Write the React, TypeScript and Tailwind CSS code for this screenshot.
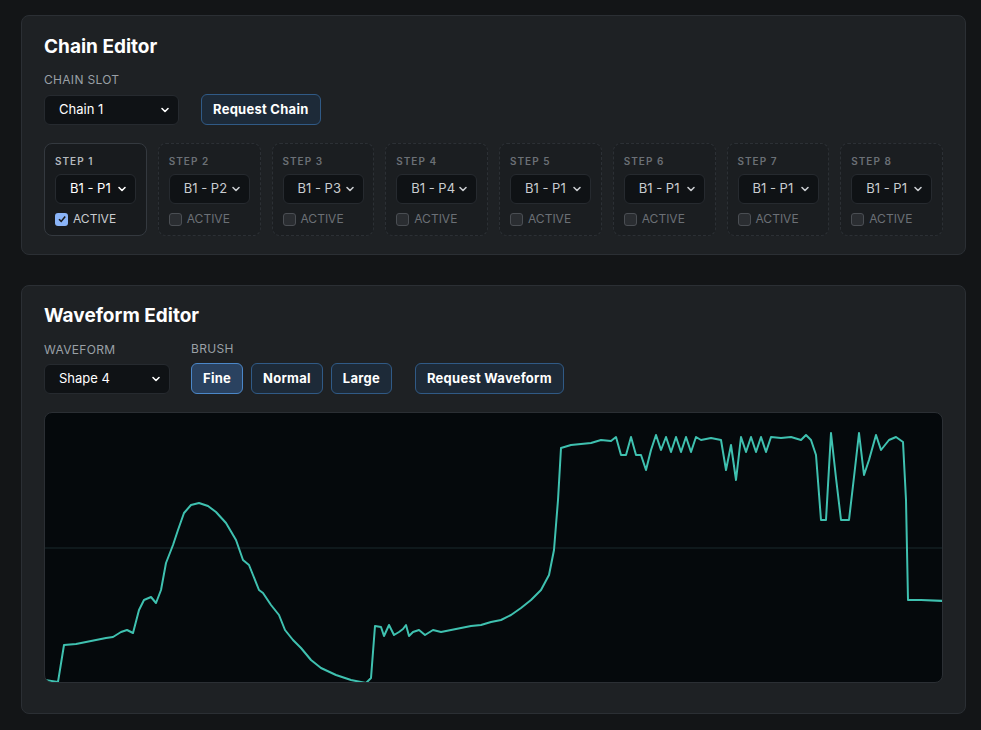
import React from "react";

const pts: [number, number][] = [[44,680],[57,682],[63,645],[75,644],[90,641],[105,638],[112,637],[120,632],[126,630],[132,633],[138,610],[143,600],[150,597],[155,603],[160,590],[165,563],[172,545],[177,530],[183,513],[190,505],[198,503],[207,506],[215,512],[225,523],[235,540],[242,560],[248,565],[252,575],[258,590],[262,593],[270,605],[278,615],[284,630],[292,640],[300,648],[310,660],[320,668],[335,675],[350,680],[365,683],[370,678],[374,626],[380,627],[383,636],[388,625],[393,635],[398,632],[402,629],[405,625],[408,636],[412,632],[418,630],[424,635],[432,630],[440,632],[450,630],[460,628],[470,626],[480,625],[490,622],[500,620],[510,615],[520,608],[530,600],[540,590],[548,575],[553,550],[557,500],[560,448],[570,445],[580,444],[590,443],[600,440],[610,441],[615,437],[620,455],[625,455],[630,437],[635,455],[640,455],[645,470],[650,450],[655,435],[660,450],[665,437],[670,452],[675,437],[680,452],[685,437],[690,452],[695,437],[700,440],[710,438],[720,440],[725,470],[730,445],[735,480],[740,437],[745,452],[750,437],[755,452],[760,437],[765,452],[770,437],[780,438],[790,437],[800,440],[805,435],[810,440],[815,455],[820,520],[825,520],[830,433],[835,478],[840,520],[848,520],[853,477],[858,433],[863,475],[868,460],[875,435],[880,450],[888,440],[895,437],[902,442],[905,500],[907,600],[920,600],[944,601]];

const font = { fontFamily: "Inter, 'Liberation Sans', sans-serif" };

function Chevron() {
  return (
    <svg width="10" height="10" viewBox="0 0 10 10" className="shrink-0">
      <path d="M2 3.5 L5 6.5 L8 3.5" fill="none" stroke="currentColor" strokeWidth="1.6" strokeLinecap="round" strokeLinejoin="round" />
    </svg>
  );
}

function Select({ label, w, dim }: { label: string; w: string; dim?: boolean }) {
  return (
    <div className={`${w} h-[30px] rounded-md border border-[#262a2f] bg-[#0f1215] flex items-center justify-between pl-[14px] pr-[8px] text-[13px] ${dim ? "text-[#c9ccd0]" : "text-white"}`}>
      <span>{label}</span>
      <Chevron />
    </div>
  );
}

function Btn({ children, active }: { children: React.ReactNode; active?: boolean }) {
  return (
    <div className={`h-[31px] px-[11px] rounded-md border flex items-center text-[13px] font-bold text-white tracking-[0.02em] ${active ? "bg-[#2a4260] border-[#4b87c8]" : "bg-[#1d2a38] border-[#305a86]"}`}>
      {children}
    </div>
  );
}

export default function App() {
  const steps = ["B1 - P1", "B1 - P2", "B1 - P3", "B1 - P4", "B1 - P1", "B1 - P1", "B1 - P1", "B1 - P1"];
  const d = pts.map(([x, y], i) => `${i ? "L" : "M"}${x - 44} ${y - 413}`).join(" ");
  return (
    <div style={font} className="w-[981px] h-[730px] bg-[#131517] pl-[21px] pr-[15px] pt-[15px] flex flex-col gap-[30px] overflow-hidden">
      <div className="h-[240px] rounded-lg border border-[#2b2f34] bg-[#1e2124] px-[22px] pt-[19px]">
        <div className="text-[19px] font-bold text-white leading-[24px]">Chain Editor</div>
        <div className="mt-[12px] text-[12px] text-[#9aa0a6] tracking-wide">CHAIN SLOT</div>
        <div className="mt-[5px] flex items-center gap-[22px]">
          <Select label="Chain 1" w="w-[135px]" />
          <Btn>Request Chain</Btn>
        </div>
        <div className="mt-[18px] grid grid-cols-8 gap-[11px]">
          {steps.map((s, i) => (
            <div key={i} className={`h-[93px] rounded-lg px-[10px] pt-[10px] ${i === 0 ? "border border-[#34393f] bg-[#181b1e]" : "border border-dashed border-[#2c3035] bg-[#1b1e21]"}`}>
              <div className={`text-[10px] font-semibold tracking-[0.1em] ${i === 0 ? "text-[#b4b9be]" : "text-[#6b7076]"}`}>STEP {i + 1}</div>
              <div className="mt-[5px]">
                <Select label={s} w="w-[81px]" dim={i !== 0} />
              </div>
              <div className={`mt-[6px] flex items-center gap-[5px] text-[12px] ${i === 0 ? "text-[#c9ccd0]" : "text-[#6b7076]"}`}>
                {i === 0 ? (
                  <div className="w-[13px] h-[13px] rounded-[3px] bg-[#8ab4f8] flex items-center justify-center">
                    <svg width="10" height="10" viewBox="0 0 10 10"><path d="M2 5.2 L4.2 7.4 L8.2 2.6" fill="none" stroke="#1a1a1a" strokeWidth="1.6" /></svg>
                  </div>
                ) : (
                  <div className="w-[13px] h-[13px] rounded-[3px] border border-[#4a4e53] bg-[#2a2d31]" />
                )}
                <span>ACTIVE</span>
              </div>
            </div>
          ))}
        </div>
      </div>
      <div className="h-[429px] rounded-lg border border-[#2b2f34] bg-[#1e2124] px-[22px] pt-[18px]">
        <div className="text-[19px] font-bold text-white leading-[24px]">Waveform Editor</div>
        <div className="mt-[12px] flex items-end">
          <div className="flex flex-col gap-[5px]">
            <div className="text-[12px] text-[#9aa0a6] tracking-wide">WAVEFORM</div>
            <Select label="Shape 4" w="w-[126px]" />
          </div>
          <div className="flex flex-col gap-[5px] ml-[21px]">
            <div className="text-[12px] text-[#9aa0a6] tracking-wide">BRUSH</div>
            <div className="flex gap-[8px]">
              <Btn active>Fine</Btn>
              <Btn>Normal</Btn>
              <Btn>Large</Btn>
            </div>
          </div>
          <div className="ml-[23px]"><Btn>Request Waveform</Btn></div>
        </div>
        <div className="mt-[18px] h-[271px] rounded-lg border border-[#2b2f34] bg-[#05090c] overflow-hidden">
          <svg width="900" height="271" viewBox="0 0 900 271" className="block">
            <line x1="0" y1="135" x2="900" y2="135" stroke="#1b2a2c" strokeWidth="1" />
            <path d={d} fill="none" stroke="#3fc1b0" strokeWidth="2" strokeLinejoin="round" />
          </svg>
        </div>
      </div>
    </div>
  );
}
